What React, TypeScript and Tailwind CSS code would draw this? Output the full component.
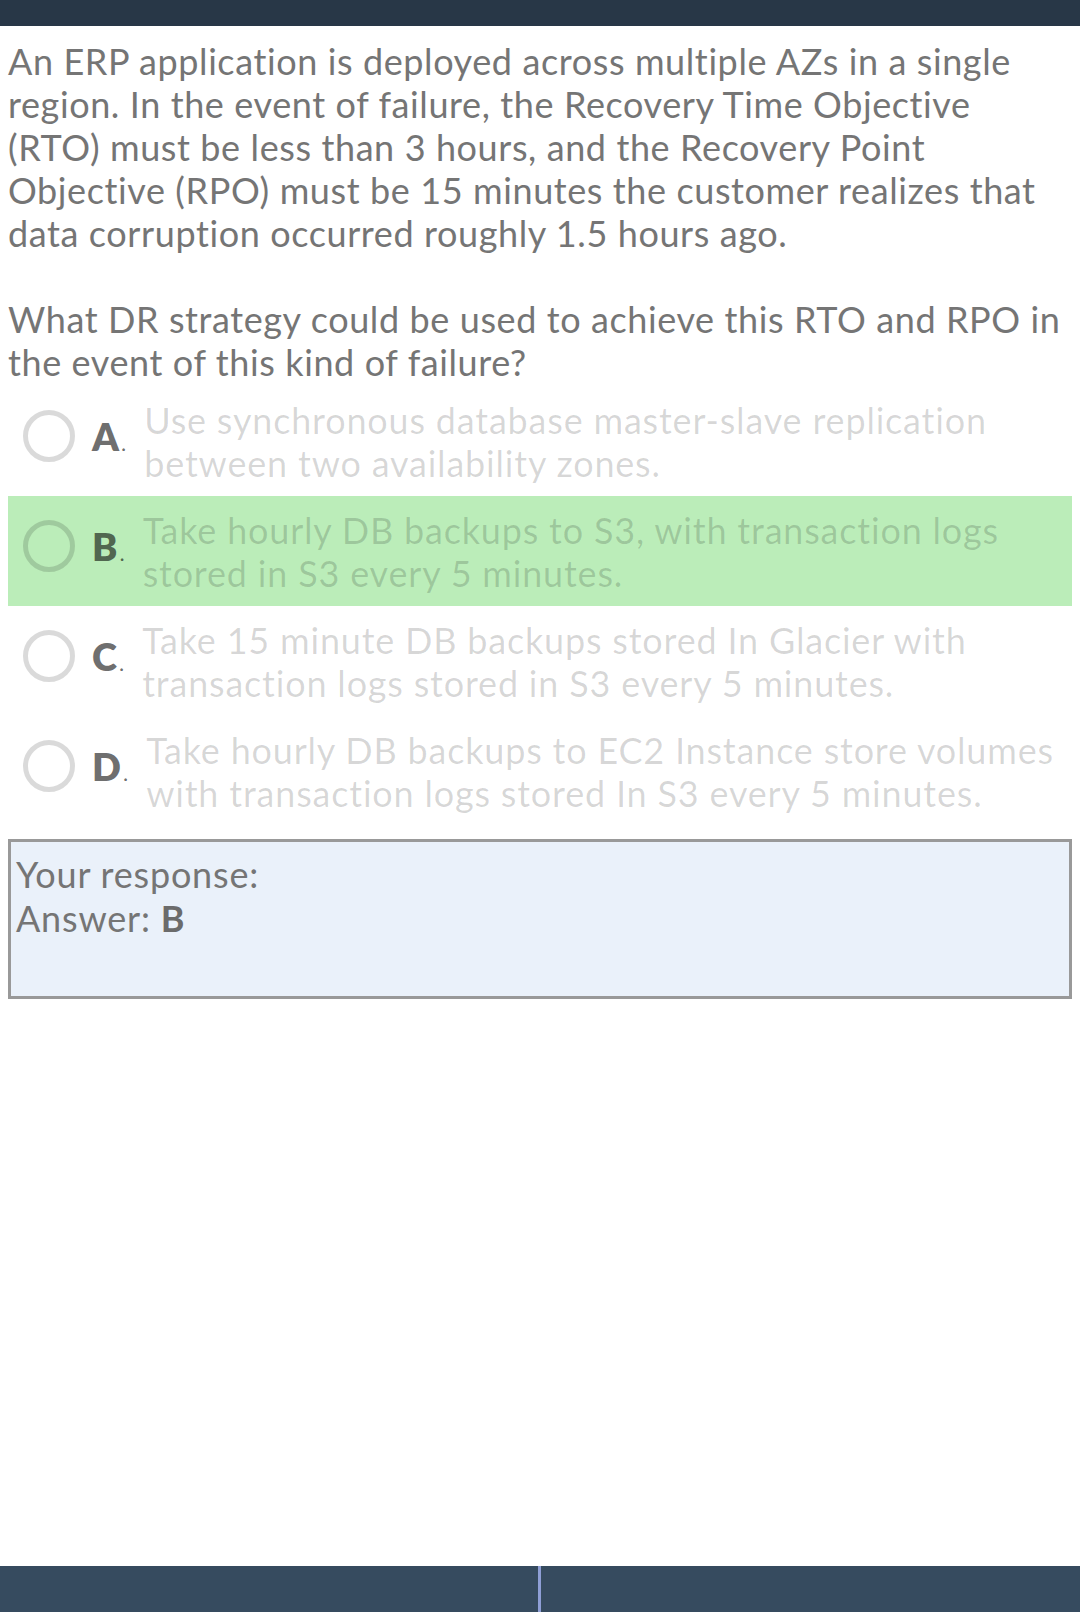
import React from "react";

type Option = {
    letter: string
    text: string
    correct?: boolean
}

const options: Option[] = [
    { letter: "A", text: "Use synchronous database master-slave replication between two availability zones." },
    { letter: "B", text: "Take hourly DB backups to S3, with transaction logs stored in S3 every 5 minutes.", correct: true },
    { letter: "C", text: "Take 15 minute DB backups stored In Glacier with transaction logs stored in S3 every 5 minutes." },
    { letter: "D", text: "Take hourly DB backups to EC2 Instance store volumes with transaction logs stored In S3 every 5 minutes." },
]

function OptionRow({ option }: { option: Option }) {
    return (
        <div className={"flex items-start pl-[15px] pr-[8px] h-[110px] " + (option.correct ? "bg-[#bbedb9]" : "")}>
            <div className="flex items-center h-[100px] shrink-0">
                <div className="w-[52px] h-[52px] rounded-full border-[5px] border-[#00000025]" />
                <span className="ml-[17px] text-[38px] font-extrabold leading-none text-[#00000094]">
                    {option.letter}
                    <span className="ml-[2px] text-[22px] font-normal">.</span>
                </span>
            </div>
            <div className="ml-[18px] pt-[13px] text-[36px] tracking-[0.8px] leading-[43px] text-[#00000029]">
                {option.text}
            </div>
        </div>
    )
}

export default function App() {
    return (
        <div className="w-[1080px] h-[1612px] bg-white flex flex-col font-['Lato',sans-serif] overflow-hidden">
            <div className="h-[26px] bg-[#283747] shrink-0" />

            <div className="flex-1 px-2 pt-[14px]">
                <div className="text-[36px] tracking-[0.6px] leading-[43px] text-[#757575]">
                    <p>
                        An ERP application is deployed across multiple AZs in a single region. In the event of failure, the Recovery Time Objective (RTO) must be less than 3 hours, and the Recovery Point Objective (RPO) must be 15 minutes the customer realizes that data corruption occurred roughly 1.5 hours ago.
                    </p>
                    <p className="mt-[43px]">
                        What DR strategy could be used to achieve this RTO and RPO in the event of this kind of failure?
                    </p>
                </div>

                <div className="mt-[2px]">
                    {options.map((o) => (
                        <OptionRow key={o.letter} option={o} />
                    ))}
                </div>

                <div className="mt-[13px] border-[3px] border-[#999999] bg-[#eaf1fa] px-[5px] pt-[10px] pb-[56px] text-[36px] tracking-[0.8px] leading-[44px] text-[#757575]">
                    <div>Your response:</div>
                    <div>
                        Answer: <span className="font-bold text-[#6b6b6b]">B</span>
                    </div>
                </div>
            </div>

            <div className="h-[46px] bg-[#364b5f] shrink-0 flex">
                <div className="w-[538px]" />
                <div className="w-[3px] bg-[#8f9fd6]" />
            </div>
        </div>
    )
}
